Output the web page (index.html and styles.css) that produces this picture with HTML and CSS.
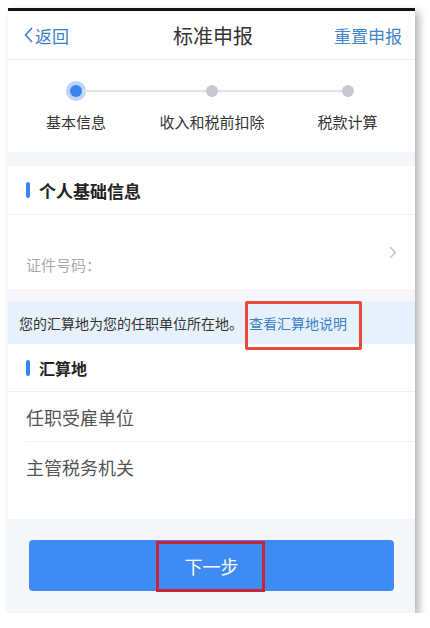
FILE: index.html
```html
<!DOCTYPE html>
<html lang="zh-CN">

<head>
    <meta charset="UTF-8">
    <meta name="viewport" content="width=device-width, initial-scale=1.0">
    <title>标准申报</title>
    <link rel="stylesheet" href="styles.css">
</head>

<body>
    <div class="phone">
        <!-- top nav -->
        <div class="nav">
            <a class="nav-back">
                <svg width="9" height="16" viewBox="0 0 9 16"><polyline points="8,1 1.5,8 8,15" fill="none" stroke="#3a80c6" stroke-width="1.6" /></svg>
                返回
            </a>
            <div class="nav-title">标准申报</div>
            <a class="nav-action">重置申报</a>
        </div>

        <!-- steps -->
        <div class="steps">
            <div class="track">
                <span class="dot active"></span>
                <span class="line"></span>
                <span class="dot"></span>
                <span class="line"></span>
                <span class="dot"></span>
            </div>
            <div class="labels">
                <div>基本信息</div>
                <div>收入和税前扣除</div>
                <div>税款计算</div>
            </div>
        </div>

        <div class="section">
            <div class="section-head"><span class="bar"></span>个人基础信息</div>
            <div class="id-row">
                <span class="id-label">证件号码：</span>
                <svg class="chev" width="8" height="13" viewBox="0 0 8 13"><polyline points="1,1 6.5,6.5 1,12" fill="none" stroke="#c4c6cc" stroke-width="1.5" /></svg>
            </div>
        </div>

        <div class="notice">
            您的汇算地为您的任职单位所在地。<span class="link mark">查看汇算地说明</span>
        </div>

        <div class="section">
            <div class="section-head small"><span class="bar"></span>汇算地</div>
            <div class="item">任职受雇单位</div>
            <div class="item last">主管税务机关</div>
            <div class="filler"></div>
        </div>

        <div class="footer">
            <button class="next-button"><span class="mark-btn">下一步</span></button>
        </div>
    </div>
</body>

</html>
```

FILE: styles.css
```css
body {
    margin: 0;
    padding: 0;
    background-color: #fff;
    font-family: "Noto Sans CJK SC", "Noto Sans", sans-serif;
    color: #333;
}

.phone {
    width: 407px;
    margin: 8px 0 0 8px;
    border-top: 3px solid #111;
    background-color: #f4f6fa;
    box-shadow: 4px 4px 8px rgba(0, 0, 0, 0.3);
}

/* nav */

.nav {
    height: 48px;
    display: flex;
    align-items: center;
    justify-content: space-between;
    padding: 0 13px 0 16px;
    background-color: #fff;
    border-bottom: 1px solid #eceef1;
}

.nav-back {
    display: flex;
    align-items: center;
    gap: 2px;
    color: #3a80c6;
    font-size: 17px;
    width: 90px;
}

.nav-title {
    font-size: 20px;
    color: #333;
}

.nav-action {
    color: #3f87c8;
    font-size: 17px;
    width: 90px;
    text-align: right;
}

/* steps */

.steps {
    height: 92px;
    background-color: #fff;
    padding-top: 25px;
    box-sizing: border-box;
    margin-bottom: 14px;
}

.track {
    display: flex;
    align-items: center;
    padding: 0 61px 0 62px;
}

.dot {
    width: 12px;
    height: 12px;
    border-radius: 50%;
    background-color: #c8c9ce;
    flex: none;
}

.dot.active {
    background-color: #3b84ee;
    box-shadow: 0 0 0 4px rgba(59, 132, 238, 0.35);
}

.line {
    flex: 1;
    height: 2px;
    background-color: #e2e3e6;
}

.labels {
    display: grid;
    grid-template-columns: 136px 136px 135px;
    margin-top: 15px;
    font-size: 15px;
    line-height: 20px;
    text-align: center;
    color: #333;
}

/* sections */

.section {
    background-color: #fff;
}

.section-head {
    height: 48px;
    display: flex;
    align-items: center;
    padding-left: 18px;
    font-size: 17px;
    font-weight: bold;
    color: #222;
    border-bottom: 1px solid #eef0f2;
}

.section-head.small {
    height: 47px;
    font-size: 16px;
}

.bar {
    width: 4px;
    height: 16px;
    border-radius: 2px;
    background-color: #3b84ee;
    margin-right: 9px;
}

.id-row {
    height: 74px;
    position: relative;
    padding-left: 18px;
    display: flex;
    align-items: flex-end;
    padding-bottom: 14px;
    box-sizing: border-box;
    margin-bottom: 12px;
}

.id-label {
    font-size: 15px;
    color: #aaa;
}

.chev {
    position: absolute;
    right: 18px;
    top: 31px;
}

.notice {
    height: 43px;
    display: flex;
    align-items: center;
    padding-left: 11px;
    background-color: #e7f1fb;
    font-size: 14px;
    color: #333;
}

.link {
    color: #3a80c6;
    margin-left: 6px;
}

.mark {
    position: relative;
}

.mark::after {
    content: "";
    position: absolute;
    left: -4px;
    right: -15px;
    top: -12px;
    bottom: -17px;
    border: 3px solid #e8493a;
    border-radius: 2px;
}

.item {
    height: 50px;
    margin-left: 18px;
    display: flex;
    align-items: center;
    font-size: 18px;
    color: #555;
    border-bottom: 1px solid #eef0f2;
    box-sizing: border-box;
}

.item.last {
    border-bottom: none;
}

.filler {
    height: 27px;
}

/* footer */

.footer {
    height: 94px;
    padding: 21px 21px 0 21px;
    box-sizing: border-box;
}

.next-button {
    width: 100%;
    height: 51px;
    border: none;
    border-radius: 4px;
    background-color: #3e8bf4;
    color: #fff;
    font-family: inherit;
    font-size: 18px;
    padding: 0;
}

.mark-btn {
    position: relative;
}

.mark-btn::after {
    content: "";
    position: absolute;
    left: -29px;
    right: -26px;
    top: -12px;
    bottom: -13px;
    border: 3px solid #c8243c;
}
```
